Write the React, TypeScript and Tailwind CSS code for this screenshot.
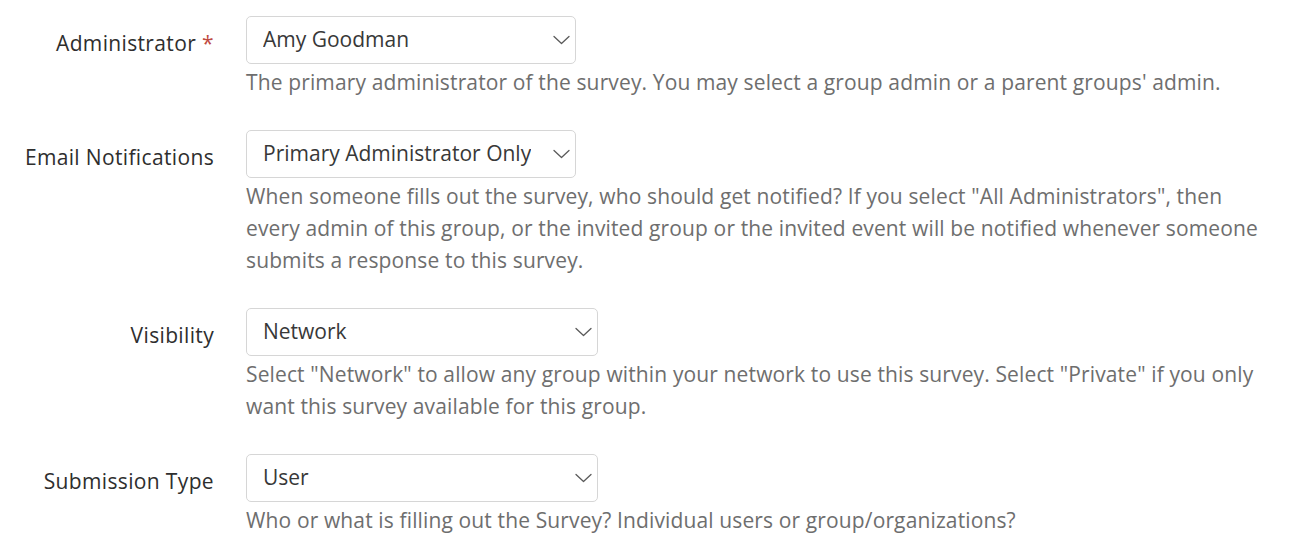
import React from 'react'

type Field = {
  label: string
  required?: boolean
  value: string
  width: string
  help: string
}

const fields: Field[] = [
  {
    label: 'Administrator',
    required: true,
    value: 'Amy Goodman',
    width: 'w-[330px]',
    help: "The primary administrator of the survey. You may select a group admin or a parent groups' admin.",
  },
  {
    label: 'Email Notifications',
    value: 'Primary Administrator Only',
    width: 'w-[330px]',
    help: 'When someone fills out the survey, who should get notified? If you select "All Administrators", then every admin of this group, or the invited group or the invited event will be notified whenever someone submits a response to this survey.',
  },
  {
    label: 'Visibility',
    value: 'Network',
    width: 'w-[352px]',
    help: 'Select "Network" to allow any group within your network to use this survey. Select "Private" if you only want this survey available for this group.',
  },
  {
    label: 'Submission Type',
    value: 'User',
    width: 'w-[352px]',
    help: 'Who or what is filling out the Survey? Individual users or group/organizations?',
  },
]

const Chevron = () => (
  <svg width="17" height="10" viewBox="0 0 17 10" fill="none" className="shrink-0">
    <path d="M1 1.5l7.5 7 7.5-7" stroke="#5a5a5a" strokeWidth="1.3" strokeLinecap="round" strokeLinejoin="round" />
  </svg>
)

export default function App() {
  return (
    <div className="min-h-screen bg-white pt-4 font-['Open_Sans','Noto_Sans',sans-serif]">
      {fields.map((f) => (
        <div key={f.label} className="flex mb-8">
          <div className="w-[214px] shrink-0 flex justify-end items-start pt-[13px]">
            <span className="text-[21px] leading-[28px] tracking-[0.35px] text-[#2e2e2e]">
              {f.label}
              {f.required && <span className="text-[#bf4a42] ml-[6px]">*</span>}
            </span>
          </div>
          <div className="ml-8 w-[1034px]">
            <div
              className={`${f.width} h-12 flex items-center justify-between pl-4 pr-[5px] border border-[#d6d6d6] rounded-[5px] bg-white`}
            >
              <span className="text-[21px] text-[#383838] truncate -mt-[1px]">{f.value}</span>
              <Chevron />
            </div>
            <p className="mt-[2px] text-[21px] leading-8 tracking-[0.13px] text-[#6e6e6e]">{f.help}</p>
          </div>
        </div>
      ))}
    </div>
  )
}
